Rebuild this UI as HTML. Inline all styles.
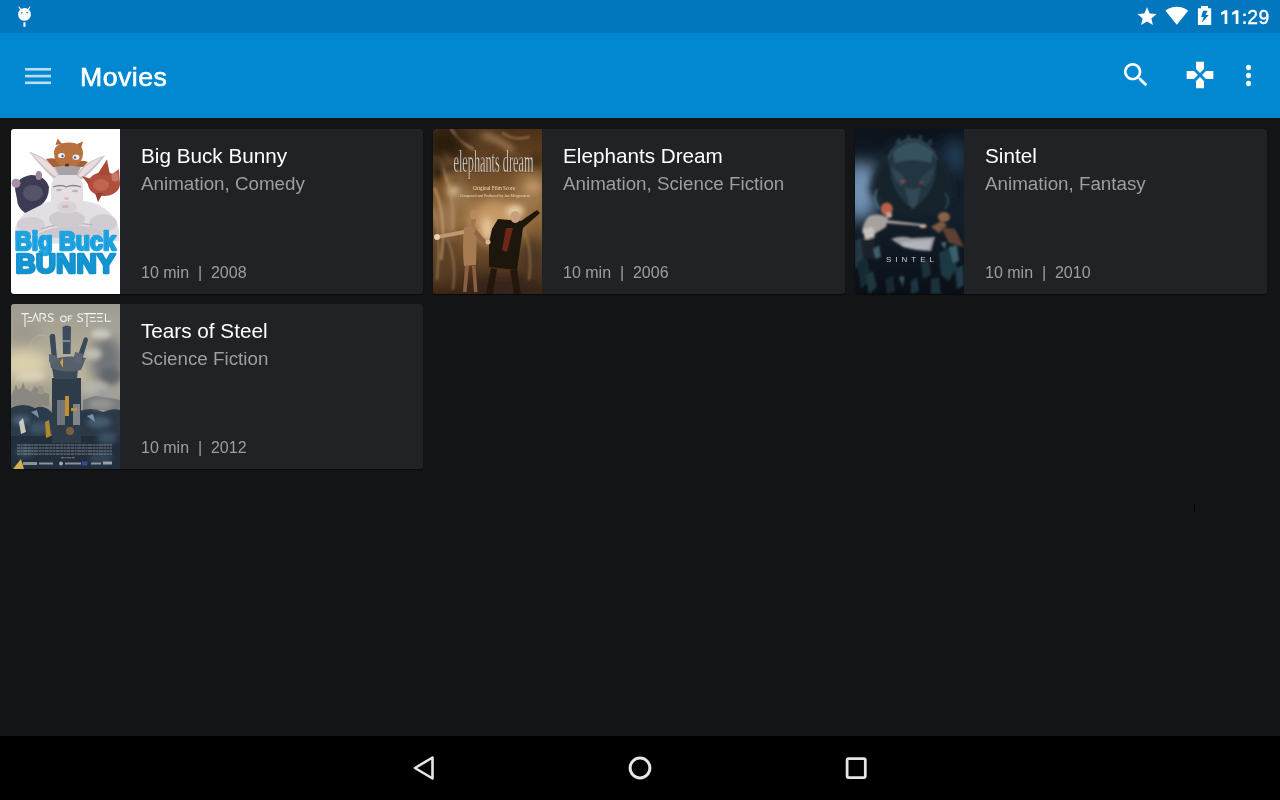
<!DOCTYPE html>
<html><head><meta charset="utf-8">
<style>
*{margin:0;padding:0;box-sizing:border-box}
html,body{width:1280px;height:800px;overflow:hidden;background:#141517;font-family:"Liberation Sans",sans-serif}
.abs{position:absolute}
#status{left:0;top:0;width:1280px;height:33px;background:#0277bd}
#toolbar{left:0;top:33px;width:1280px;height:85px;background:#0288d1}
#tbshadow{left:0;top:118px;width:1280px;height:1px;background:#17110f}
#title{will-change:transform;left:80px;top:62px;color:#fff;font-size:26.67px;font-weight:400;line-height:30px;letter-spacing:0.5px;-webkit-text-stroke:0.6px #fff}
#clock{will-change:transform;left:1220px;top:6px;color:#fff;font-size:19.3px;line-height:24px;letter-spacing:0.6px;-webkit-text-stroke:0.35px #fff}
#nav{left:0;top:736px;width:1280px;height:64px;background:#000}
.card{position:absolute;width:412px;height:165px;background:#212226;border-radius:3px;overflow:hidden;box-shadow:0 1px 1.5px rgba(0,0,0,.55)}
.poster{will-change:transform;position:absolute;left:0;top:0;width:109px;height:165px;overflow:hidden}
.poster svg{display:block}
.t1{will-change:transform;position:absolute;left:130px;top:16px;color:#fff;font-size:20.7px;line-height:22px;white-space:nowrap}
.t2{will-change:transform;position:absolute;left:130px;top:44px;color:#9e9e9e;font-size:18.8px;line-height:22px;white-space:nowrap}
.t3{will-change:transform;position:absolute;left:130px;top:135px;color:#9e9e9e;font-size:16px;line-height:18px;white-space:pre}
</style></head><body>
<div id="status" class="abs"></div>
<div id="toolbar" class="abs"></div>
<div id="tbshadow" class="abs"></div>

<!-- status bar icons -->
<svg class="abs" style="left:0;top:0" width="1280" height="32">
  <!-- android bot -->
  <g fill="#fff">
    <circle cx="24.5" cy="14.4" r="6.4"/>
    <rect x="23.4" y="22.3" width="2.1" height="4.5"/>
    <path d="M18.9 7 L20.9 9.6" stroke="#fff" stroke-width="1.15" stroke-linecap="round"/>
    <path d="M29.9 7 L27.9 9.6" stroke="#fff" stroke-width="1.15" stroke-linecap="round"/>
  </g>
  <g fill="#0277bd">
    <path d="M20.5 12.2 h2.4 l-1.2 1.6z"/>
    <path d="M26 12.2 h2.4 l-1.2 1.6z"/>
  </g>
  <!-- star -->
  <path fill="#fff" transform="translate(1135.5,5.4) scale(0.96,0.93)" d="M12 17.27L18.18 21l-1.64-7.03L22 9.24l-7.19-.61L12 2 9.19 8.63 2 9.24l5.46 4.73L5.82 21z"/>
  <!-- wifi -->
  <path fill="#fff" transform="translate(1165.1,3.9) scale(0.975)" d="M12.01 21.49L23.64 7c-.45-.34-4.93-4-11.64-4C5.28 3 .81 6.66.36 7l11.63 14.49.01.01.01-.01z"/>
  <!-- battery -->
  <path fill="#fff" fill-rule="evenodd" d="M1201 6.1h7v2.1h3.2v16.7h-13.3v-16.7h3.1z M1203 10.8h4.6l-2.1 4.3h3.3l-7.1 7.6 2-5.6h-2.6z"/>
</svg>
<div id="clock" class="abs"><span style="color:transparent;-webkit-text-stroke:0">11:</span>29</div>
<svg class="abs" style="left:1200px;top:0" width="60" height="32" fill="#fff">
  <path d="M24.6 10.2 H27.3 V23.9 H24.6 V13.6 L21.1 14.9 V12.6 Z"/>
  <path d="M35.7 10.2 H38.4 V23.9 H35.7 V13.6 L32.2 14.9 V12.6 Z"/>
  <rect x="43.2" y="13.4" width="2.6" height="2.6" rx="0.6"/>
  <rect x="43.2" y="21.3" width="2.6" height="2.6" rx="0.6"/>
</svg>

<!-- toolbar icons -->
<svg class="abs" style="left:0;top:32px" width="1280" height="86">
  <g fill="#fff" fill-opacity="0.72">
    <rect x="25" y="36" width="26" height="2.6"/>
    <rect x="25" y="42.8" width="26" height="2.6"/>
    <rect x="25" y="49.5" width="26" height="2.6"/>
  </g>
  <g transform="translate(1120,27) scale(1.3333)" fill="#fff">
    <path d="M15.5 14h-.79l-.28-.27C15.41 12.59 16 11.11 16 9.5 16 5.910 13.09 3 9.5 3S3 5.91 3 9.5 5.91 16 9.5 16c1.61 0 3.09-.59 4.23-1.57l.27.28v.79l5 4.99L20.49 19l-4.99-5zm-6 0C7.01 14 5 11.99 5 9.5S7.01 5 9.5 5 14 7.01 14 9.5 11.99 14 9.5 14z"/>
  </g>
  <g transform="translate(1184,27) scale(1.3333)" fill="#fff">
    <path d="M15 7.5V2H9v5.5l3 3 3-3zM7.5 9H2v6h5.5l3-3-3-3zM9 16.5V22h6v-5.5l-3-3-3 3zM16.5 9l-3 3 3 3H22V9h-5.5z"/>
  </g>
  <g transform="translate(1232.5,27.5) scale(1.3333)" fill="#fff">
    <path d="M12 8c1.1 0 2-.9 2-2s-.9-2-2-2-2 .9-2 2 .9 2 2 2zm0 2c-1.1 0-2 .9-2 2s.9 2 2 2 2-.9 2-2-.9-2-2-2zm0 6c-1.1 0-2 .9-2 2s.9 2 2 2 2-.9 2-2-.9-2-2-2z"/>
  </g>
</svg>
<div id="title" class="abs">Movies</div>

<div class="card" style="left:11px;top:129px">
  <div class="poster" id="p1"><svg width="109" height="165" viewBox="0 0 109 165">
<defs>
  <filter id="b1" x="-20%" y="-20%" width="140%" height="140%"><feGaussianBlur stdDeviation="0.7"/></filter>
  <filter id="b2" x="-30%" y="-30%" width="160%" height="160%"><feGaussianBlur stdDeviation="2"/></filter>
  <linearGradient id="bbt" x1="0" y1="0" x2="0" y2="1"><stop offset="0" stop-color="#22aae6"/><stop offset="1" stop-color="#0e88c8"/></linearGradient>
</defs>
<rect width="109" height="165" fill="#fff"/>
<g filter="url(#b1)">
  <!-- body -->
  <path d="M4 101 Q6 86 25 78 Q40 70 55 72 Q75 70 88 76 Q106 86 108 101 L108 112 Q55 118 4 112z" fill="#e2dfe3"/>
  <ellipse cx="20" cy="96" rx="14" ry="8" fill="#d2ced3"/>
  <ellipse cx="92" cy="94" rx="14" ry="9" fill="#d0ccd1"/>
  <path d="M28 104 Q50 94 80 98 Q90 100 92 106 Q60 110 28 108z" fill="#ccc7cc"/>
  <path d="M30 100 Q55 92 82 96" stroke="#b8b2b8" stroke-width="1.2" fill="none"/>
  <ellipse cx="56" cy="90" rx="18" ry="9" fill="#cfcace"/>
  <!-- ears -->
  <path d="M18 22.5 Q34 28 44 38 L50.5 47 L43 50 Q30 38 18 22.5z" fill="#cbc1c4"/>
  <path d="M21 24.5 Q34 30 42 38 L47 46 L43.5 47 Q31 37 21 24.5z" fill="#eddcdd"/>
  <path d="M94 26.5 Q78 31 70 40 L64 48 L71 50.5 Q84 40 94 26.5z" fill="#cbc1c4"/>
  <path d="M91 28 Q78 33 71 41 L67 47 L70.5 48 Q82 39 91 28z" fill="#eddcdd"/>
  <!-- chinchilla -->
  <path d="M4 60 Q6 48 20 46 Q34 46 38 58 Q38 70 30 76 L14 84 Q6 78 6 70z" fill="#3d3b53"/>
  <ellipse cx="22" cy="64" rx="10" ry="8" fill="#55526a"/>
  <ellipse cx="5" cy="54.3" rx="4.5" ry="4.5" fill="#a690a8"/>
  <ellipse cx="27.8" cy="46.5" rx="3.2" ry="4.5" fill="#9c86a0"/>
  <!-- red squirrel -->
  <ellipse cx="93" cy="55" rx="16" ry="12" fill="#b0503c"/>
  <path d="M86 46 L96 30.5 L99 46z" fill="#a84a36"/>
  <path d="M100 46 L108 40 L109 56z" fill="#b85a46"/>
  <path d="M80 50 L71 47 L79 58z" fill="#a84a36"/>
  <path d="M84 64 L87 73 L92 64z" fill="#983e2e"/>
  <ellipse cx="90" cy="56" rx="8" ry="6" fill="#c06450"/>
  <ellipse cx="104" cy="48" rx="3.5" ry="4.5" fill="#c87a6a"/>
  <!-- head -->
  <path d="M40 60 Q40 45 56 44 Q72 45 72 60 L72 72 Q70 84 56 84 Q42 84 40 72z" fill="#e2dee2"/><ellipse cx="56" cy="78" rx="10" ry="6" fill="#d8d2d6"/>
  <path d="M42 58 Q50 55 55 58 Q62 55 70 58" stroke="#8a8088" stroke-width="1.3" fill="none"/>
  <ellipse cx="48" cy="61" rx="3" ry="1.3" fill="#c8b0b4"/>
  <ellipse cx="64" cy="62" rx="3" ry="1.3" fill="#c8b0b4"/>
  <ellipse cx="55.6" cy="69.5" rx="2.2" ry="1.5" fill="#e0b8bc"/>
  <ellipse cx="54.3" cy="77.5" rx="3.5" ry="1.6" fill="#d4b4b4"/>
  <!-- orange squirrel -->
  <path d="M35 30 Q44 28 50 32 L62 34 Q70 30 77 33 L72 38 L42 38z" fill="#a46038"/>
  <path d="M43 24 Q43 14 58 13.5 Q72 14 72 24 Q72 34 62 38 L52 38 Q43 34 43 24z" fill="#b8703e"/>
  <path d="M44.5 16 L46.7 9.5 L51 15z" fill="#b06a3a"/>
  <path d="M66 15 L72 12.6 L70 19z" fill="#b06a3a"/>
  <path d="M44 38 Q56 35 70 38 L66 46 L48 46z" fill="#a8a2a6"/>
  <ellipse cx="50.5" cy="26.5" rx="3.4" ry="2.6" fill="#f0f0f4"/>
  <ellipse cx="65" cy="28.2" rx="3.4" ry="2.6" fill="#f0f0f4"/>
  <circle cx="51.5" cy="27" r="1.2" fill="#4a5aa0"/>
  <circle cx="64" cy="28.5" r="1.2" fill="#4a5aa0"/>
  <ellipse cx="56" cy="36" rx="2.2" ry="1.6" fill="#5a3020"/>
</g>
<!-- title -->
<g font-family="Liberation Sans" font-weight="700" fill="url(#bbt)">
  <text x="4" y="121" font-size="25" textLength="101" lengthAdjust="spacingAndGlyphs" stroke="#1ea4e0" stroke-width="2.6" stroke-linejoin="round">Big Buck</text>
  <text x="4.5" y="144" font-size="27" textLength="100" lengthAdjust="spacingAndGlyphs" stroke="#1292cf" stroke-width="2.6" stroke-linejoin="round">BUNNY</text>
</g>
</svg>
</div>
  <div class="t1">Big Buck Bunny</div>
  <div class="t2">Animation, Comedy</div>
  <div class="t3">10 min  |  2008</div>
</div>
<div class="card" style="left:433px;top:129px">
  <div class="poster" id="p2"><svg width="109" height="165" viewBox="0 0 109 165">
<defs>
  <filter id="e1" x="-30%" y="-30%" width="160%" height="160%"><feGaussianBlur stdDeviation="0.6"/></filter>
  <filter id="e4" x="-50%" y="-50%" width="200%" height="200%"><feGaussianBlur stdDeviation="1.3"/></filter>
  <filter id="e2" x="-50%" y="-50%" width="200%" height="200%"><feGaussianBlur stdDeviation="3"/></filter>
  <filter id="e3" x="-50%" y="-50%" width="200%" height="200%"><feGaussianBlur stdDeviation="7"/></filter>
  <linearGradient id="ebg" x1="0" y1="0" x2="0" y2="1">
    <stop offset="0" stop-color="#4c3018"/><stop offset="0.3" stop-color="#74502a"/><stop offset="0.55" stop-color="#90683a"/><stop offset="0.8" stop-color="#604226"/><stop offset="1" stop-color="#3a2412"/>
  </linearGradient>
</defs>
<rect width="109" height="165" fill="url(#ebg)"/>
<g filter="url(#e3)">
  <ellipse cx="62" cy="92" rx="26" ry="22" fill="#c89a68"/>
  <ellipse cx="98" cy="62" rx="16" ry="22" fill="#a07a50"/>
  <ellipse cx="12" cy="15" rx="22" ry="18" fill="#2c1c10"/>
  <ellipse cx="50" cy="8" rx="20" ry="10" fill="#5a4028"/>
  <ellipse cx="8" cy="125" rx="12" ry="30" fill="#5a4028"/>
  <ellipse cx="70" cy="160" rx="40" ry="12" fill="#34241a"/>
  <ellipse cx="28" cy="68" rx="10" ry="12" fill="#a08058"/>
  <ellipse cx="100" cy="130" rx="12" ry="20" fill="#4a3422"/>
</g>
<g filter="url(#e2)" opacity="0.9">
  <path d="M2 30 Q26 50 18 110" stroke="#a8865e" stroke-width="4" fill="none"/>
  <path d="M10 25 Q30 40 30 70" stroke="#8a6a48" stroke-width="3" fill="none"/>
  <path d="M50 6 Q70 12 80 22" stroke="#a88058" stroke-width="6" fill="none"/>
  <path d="M0 45 Q20 40 40 30" stroke="#3a2614" stroke-width="6" fill="none"/>
  <path d="M60 30 Q85 40 109 30" stroke="#4a321c" stroke-width="5" fill="none"/>
  <ellipse cx="20" cy="62" rx="6" ry="4" fill="#e0c8a0"/>
  <ellipse cx="82" cy="82" rx="9" ry="6" fill="#f0d8b0"/>
  <ellipse cx="54" cy="100" rx="5" ry="12" fill="#e8cca0"/>
  <ellipse cx="100" cy="58" rx="8" ry="6" fill="#c09468"/>
  <ellipse cx="10" cy="90" rx="8" ry="16" fill="#9a7450"/>
</g>
<g filter="url(#e4)" opacity="0.6" stroke-linecap="round" fill="none">
  <path d="M2 60 Q14 90 8 130" stroke="#d0a878" stroke-width="2.6"/>
  <path d="M10 40 Q22 70 20 100" stroke="#c09868" stroke-width="2.2"/>
  <path d="M0 80 Q8 100 4 150" stroke="#b08858" stroke-width="2.2"/>
  <path d="M18 0 Q28 14 40 20" stroke="#c8a070" stroke-width="2.2"/>
  <path d="M70 4 Q80 12 96 8" stroke="#b89060" stroke-width="2.2"/>
  <path d="M90 100 Q100 120 96 150" stroke="#a07a50" stroke-width="2.4"/>
  <path d="M14 110 Q24 130 20 160" stroke="#a88058" stroke-width="2.2"/>
</g>
<g filter="url(#e2)" opacity="0.8">
  <ellipse cx="4" cy="40" rx="5" ry="12" fill="#2a1a0c"/>
  <ellipse cx="30" cy="8" rx="10" ry="5" fill="#3a2612"/>
  <ellipse cx="104" cy="30" rx="6" ry="10" fill="#4a3018"/>
</g>
<!-- title -->
<text x="20.5" y="42" font-family="Liberation Serif" font-size="25" fill="#dcdad6" stroke="#3a2a1a" stroke-width="0.3" textLength="80" lengthAdjust="spacingAndGlyphs" transform="translate(0,-12) scale(1,1.3)">elephants dream</text>
<text x="40" y="60.5" font-family="Liberation Serif" font-size="6.5" fill="#f0dcc4" textLength="42" lengthAdjust="spacingAndGlyphs">Original Film Score</text>
<text x="27" y="68" font-family="Liberation Serif" font-size="5" fill="#ecd8c0" textLength="70" lengthAdjust="spacingAndGlyphs">Composed and Produced by Jan Morgenstern</text>
<!-- figures -->
<g filter="url(#e1)">
  <!-- left figure -->
  <path d="M31 99 Q37 96 44 98 L43 136 L31 137 Q29 118 31 99z" fill="#a87c52"/>
  <path d="M31 101 L5 106 L4 110 L31 105z" fill="#c09870"/>
  <path d="M43 100 L56 115 L53 118 L41 105z" fill="#8c6644"/>
  <path d="M32 137 L30 163 L33.5 163 L36 137z M39 137 L41 163 L44.5 163 L42.5 137z" fill="#8a6040"/>
  <ellipse cx="40.5" cy="86" rx="3.4" ry="5" fill="#b88a60"/>
  <path d="M38 90 L43 90 L42 98 L38 98z" fill="#a07450"/>
  <ellipse cx="4" cy="108" rx="3" ry="3" fill="#e8d0b0"/>
  <!-- right figure -->
  <path d="M65 90 L88 92 L104 81 L107 84 L90 99 L84 141 L56 138 L56 114 L59 100z" fill="#1e140e"/>
  <path d="M73 99 L80 99 L74 123 L69 121z" fill="#6e2616"/>
  <path d="M58 139 L53 165 L60 165 L64 140z M77 141 L81 165 L88 165 L84 140z" fill="#22170e"/>
  <ellipse cx="82.3" cy="88" rx="5" ry="6" fill="#c8a080"/>
  <ellipse cx="55" cy="113" rx="2.5" ry="2.5" fill="#d8b890"/>
</g>
</svg>
</div>
  <div class="t1">Elephants Dream</div>
  <div class="t2">Animation, Science Fiction</div>
  <div class="t3">10 min  |  2006</div>
</div>
<div class="card" style="left:855px;top:129px">
  <div class="poster" id="p3"><svg width="109" height="165" viewBox="0 0 109 165">
<defs>
  <filter id="s1" x="-30%" y="-30%" width="160%" height="160%"><feGaussianBlur stdDeviation="0.8"/></filter>
  <filter id="s2" x="-50%" y="-50%" width="200%" height="200%"><feGaussianBlur stdDeviation="3"/></filter>
  <filter id="s3" x="-80%" y="-80%" width="260%" height="260%"><feGaussianBlur stdDeviation="8"/></filter>
  <linearGradient id="sbg" x1="0" y1="0" x2="0" y2="1">
    <stop offset="0" stop-color="#0c131c"/><stop offset="0.5" stop-color="#13202c"/><stop offset="1" stop-color="#0a0f16"/>
  </linearGradient>
</defs>
<rect width="109" height="165" fill="url(#sbg)"/>
<g filter="url(#s3)">
  <ellipse cx="5" cy="62" rx="18" ry="30" fill="#7292b2"/>
  <ellipse cx="100" cy="28" rx="12" ry="18" fill="#223c56"/>
  <ellipse cx="55" cy="45" rx="35" ry="30" fill="#1a2a36"/>
</g>
<!-- dragon -->
<g filter="url(#s2)">
  <path d="M14 62 Q18 34 36 26 Q56 10 80 22 Q100 34 100 70 L82 86 L32 86z" fill="#16222c"/>
</g>
<g filter="url(#s1)">
  <path d="M33 30 Q38 12 57 10 Q76 12 82 30 L80 50 Q74 70 58 80 Q42 70 36 50z" fill="#223440"/>
  <path d="M38 24 Q46 14 58 13 Q70 14 78 24 L76 34 Q58 28 40 34z" fill="#36525e"/>
  <path d="M36 38 Q46 42 52 52 L46 58 Q38 50 36 38z" fill="#2e4652"/>
  <path d="M80 38 Q70 42 64 52 L70 58 Q78 50 80 38z" fill="#2a424e"/>
  <path d="M50 58 Q58 62 66 58 L62 76 L58 80 L54 76z" fill="#304854"/>
  <path d="M40 14 L44 8 L46 14z M50 10 L54 5 L56 11z M62 10 L66 5 L68 11z M72 14 L76 9 L77 16z" fill="#2a3e4a"/>
  <path d="M33 30 Q38 12 57 10 Q76 12 82 30" stroke="#4a7080" stroke-width="0.8" fill="none"/>
  <ellipse cx="47.5" cy="52.6" rx="2" ry="1" fill="#b8403a"/>
  <ellipse cx="66" cy="53.7" rx="1.8" ry="1" fill="#9a3a34"/>
  <path d="M22 60 Q17 72 24 80" stroke="#4e7e8e" stroke-width="1.4" fill="none"/>
  <path d="M90 64 Q96 72 90 80" stroke="#3a6070" stroke-width="1.2" fill="none"/>
</g>
<!-- girl -->
<g filter="url(#s1)">
  <path d="M14 87 Q24 83 33 89 L31 98 Q22 104 12 109 L7 103 Q8 94 14 87z" fill="#a8a09c"/><path d="M31 91 L66 95 L66 97 L31 94z" fill="#b0a49e"/>
  <path d="M8 100 L18 98 L20 108 L10 111z" fill="#c8c0bc"/>
  <path d="M6 110 L20 110 L18 130 L8 128z" fill="#1e242a"/>
  <ellipse cx="31.7" cy="80" rx="6" ry="6.5" fill="#b8604a"/>
  <ellipse cx="34" cy="86" rx="3" ry="3" fill="#c8a090"/>
  <ellipse cx="68" cy="97" rx="3.5" ry="2" fill="#d0aca0"/>
  <!-- baby dragon -->
  <ellipse cx="89" cy="88" rx="6" ry="5" fill="#8a6446"/>
  <path d="M76 98 L86 92 L92 96 L84 104z" fill="#7a5a40"/>
  <path d="M86 98 L100 100 L109 118 L94 114z" fill="#5e4030"/>
  <!-- sword -->
  <path d="M36 110 Q46 106 56 109 L80 108 L76 122 Q62 122 48 118z" fill="#9a9aa2"/>
  <path d="M46 113 L76 111 L74 120 Q62 121 48 117z" fill="#b4b4bc"/>
</g>
<!-- crystals -->
<g filter="url(#s1)">
  <path d="M0 112 L6 108 L9 132 L0 140z" fill="#213742"/>
  <path d="M2 134 L12 128 L16 150 L6 160z" fill="#172a33"/>
  <path d="M18 120 L24 116 L26 128 L20 130z" fill="#3a606c"/>
  <path d="M10 146 L18 142 L22 158 L14 165z" fill="#1f3740"/>
  <path d="M66 134 L74 130 L76 146 L68 150z" fill="#1b3039"/>
  <path d="M84 124 L96 118 L102 138 L94 152 L86 146z" fill="#1f3742"/>
  <path d="M94 118 L102 116 L104 132 L98 134z" fill="#3a616d"/>
  <path d="M86 114 L91 113 L90 120z" fill="#4f7581"/>
  <path d="M100 140 L108 136 L109 156 L102 160z" fill="#223c48"/>
  <path d="M30 150 L38 146 L40 162 L32 165z" fill="#162831"/>
  <path d="M44 148 L49 147 L48 158z" fill="#375b66"/>
  <path d="M56 152 L62 148 L64 162 L56 165z" fill="#1e343f"/>
  <path d="M76 150 L84 148 L86 165 L76 165z" fill="#1a3039"/>
</g>
<text x="31" y="132.7" font-family="Liberation Sans" font-size="8" fill="#cfcfd4" textLength="48" lengthAdjust="spacing">SINTEL</text>
</svg>
</div>
  <div class="t1">Sintel</div>
  <div class="t2">Animation, Fantasy</div>
  <div class="t3">10 min  |  2010</div>
</div>
<div class="card" style="left:11px;top:304px">
  <div class="poster" id="p4"><svg width="109" height="165" viewBox="0 0 109 165">
<defs>
  <filter id="t0" x="-10%" y="-50%" width="120%" height="200%"><feGaussianBlur stdDeviation="0.6"/></filter>
  <filter id="t1" x="-30%" y="-30%" width="160%" height="160%"><feGaussianBlur stdDeviation="0.7"/></filter>
  <filter id="t2" x="-50%" y="-50%" width="200%" height="200%"><feGaussianBlur stdDeviation="2.5"/></filter>
  <filter id="t3" x="-80%" y="-80%" width="260%" height="260%"><feGaussianBlur stdDeviation="6"/></filter>
  <linearGradient id="tbg" x1="0" y1="0" x2="0" y2="1">
    <stop offset="0" stop-color="#9c9a90"/><stop offset="0.25" stop-color="#b0aa98"/><stop offset="0.45" stop-color="#bcb49c"/><stop offset="0.6" stop-color="#9a9890"/><stop offset="1" stop-color="#6a6e70"/>
  </linearGradient>
</defs>
<rect width="109" height="165" fill="url(#tbg)"/>
<g filter="url(#t3)">
  <ellipse cx="14" cy="60" rx="22" ry="14" fill="#dcd0ac"/>
  <ellipse cx="96" cy="58" rx="16" ry="26" fill="#707478"/>
  <ellipse cx="90" cy="20" rx="20" ry="12" fill="#a4a298"/>
  <ellipse cx="12" cy="28" rx="16" ry="14" fill="#9e9a8c"/>
  <ellipse cx="30" cy="88" rx="22" ry="10" fill="#a8a090"/>
</g>
<g filter="url(#t2)" opacity="0.85">
  <ellipse cx="90" cy="30" rx="10" ry="5" fill="#d4d0c4"/>
  <ellipse cx="82" cy="50" rx="9" ry="6" fill="#c8c4b8"/>
  <ellipse cx="100" cy="72" rx="10" ry="8" fill="#5e646a"/>
  <ellipse cx="84" cy="84" rx="14" ry="7" fill="#b8b6ae"/>
  <ellipse cx="20" cy="72" rx="14" ry="5" fill="#dcd4bc"/>
  <ellipse cx="96" cy="92" rx="12" ry="8" fill="#a0a0a0"/>
</g>
<circle cx="31" cy="43" r="12" fill="none" stroke="#c4c0b0" stroke-width="0.8" opacity="0.55" filter="url(#t1)"/>
<!-- city -->
<g filter="url(#t1)">
  <path d="M0 92 L3 86 L5 80 L7 86 L10 84 L12 78 L14 84 L20 88 L24 82 L28 86 L38 90 L38 102 L0 104z" fill="#8a8880"/>
  <path d="M26 90 L28 82 L32 82 L34 90z" fill="#9a968a"/>
  <path d="M72 96 L84 92 L100 94 L109 96 L109 106 L72 106z" fill="#7a7c7e"/>
</g>
<!-- rubble -->
<g filter="url(#t1)">
  <path d="M0 104 Q12 98 24 104 Q34 100 42 110 L40 140 L0 140z" fill="#2c3a48"/>
  <path d="M66 108 Q80 102 92 108 Q100 104 109 106 L109 165 L66 165z" fill="#2a3846"/>
  <path d="M0 132 L109 132 L109 165 L0 165z" fill="#222e3a"/>
</g>
<g filter="url(#t2)" opacity="0.9">
  <ellipse cx="10" cy="116" rx="9" ry="5" fill="#4e6278"/>
  <ellipse cx="28" cy="124" rx="10" ry="6" fill="#40546a"/>
  <ellipse cx="88" cy="118" rx="12" ry="6" fill="#4a5e74"/>
  <ellipse cx="96" cy="134" rx="10" ry="6" fill="#3e5268"/>
  <ellipse cx="14" cy="148" rx="10" ry="6" fill="#34465a"/>
  <ellipse cx="90" cy="154" rx="12" ry="6" fill="#34465a"/>
  <ellipse cx="90" cy="100" rx="12" ry="5" fill="#9a9a96"/>
</g>
<g filter="url(#t1)">
  <path d="M8 118 L12 114 L15 128 L10 130z" fill="#c8c8c0"/>
  <path d="M34 118 L38 116 L40 132 L35 134z" fill="#b08830"/>
  <path d="M76 112 L82 110 L84 118z" fill="#7890a8"/>
  <path d="M20 108 L26 106 L28 114z" fill="#7890a8"/>
</g>
<!-- hand tower -->
<g filter="url(#t1)">
  <path d="M41 74 L70 74 L70 139 L41 139z" fill="#2e3a4a"/>
  <path d="M46 96 L54 96 L54 121 L46 121z" fill="#70767c"/>
  <path d="M62 100 L69 100 L69 121 L62 121z" fill="#80868a"/>
  <path d="M54 92 L58 92 L58 112 L54 112z" fill="#c09030"/>
  <path d="M60 104 L66 104 L66 107 L60 107z" fill="#c09030"/>
  <ellipse cx="59" cy="127" rx="4" ry="4" fill="#7a6040"/>
  <path d="M41 64 Q54 60 67 64 L66 75 L43 75z" fill="#3c4a58"/>
  <path d="M38.7 56 Q56 50 75 54 L70 66 Q54 70 40 64z" fill="#56606c"/>
  <path d="M49 58 L52 54 L52 64z" fill="#d0a838"/>
  <!-- fingers -->
  <path d="M38.5 32 Q41 28 44 31 L46 54 L41 56z" fill="#3a4a5c"/>
  <path d="M51.5 23 Q56 20 60 23 L59.5 50 L52 50z" fill="#3c4c5e"/>
  <rect x="52" y="36" width="7" height="2" fill="#7a8a98"/>
  <path d="M73 34 Q76.5 32 77 36 L71 56 L66 54z" fill="#3a4a5c"/>
  <path d="M38 50 L46 52 L44 60 L38 58z" fill="#5a6674"/>
  <path d="M64 48 L72 50 L70 60 L62 58z" fill="#5a6674"/>
</g>
<!-- credits -->
<g stroke="#c0c4c8" stroke-width="1.1" stroke-dasharray="3 0.6 2 0.6 4 0.6" opacity="0.55" filter="url(#t0)">
  <path d="M6 141 H101"/><path d="M6 144 H101"/><path d="M6 147 H101"/><path d="M6 150 H101"/>
  <path d="M50 153.8 H64"/>
</g>
<g opacity="0.8" filter="url(#t0)">
  <rect x="12" y="158" width="14" height="3" fill="#a8acb0"/>
  <rect x="28" y="158.5" width="14" height="2" fill="#a8acb0"/>
  <circle cx="50" cy="159.5" r="2" fill="#c0c4c8"/>
  <rect x="54" y="158.5" width="16" height="2" fill="#a8acb0"/>
  <rect x="71" y="157.5" width="5.5" height="4" fill="#3a50b0"/>
  <rect x="80" y="158.5" width="10" height="2" fill="#a8acb0"/>
  <rect x="92" y="157.5" width="9" height="3" fill="#b8bcc0"/>
</g>
<path d="M2 165 L10 155 L13 165z" fill="#d0b050" filter="url(#t1)"/>
<!-- title -->
<g fill="none" stroke="#f4f4f2" stroke-width="1.05">
  <path d="M10.2 9.6 H18 M14 9.6 V23"/>
  <path d="M17 13.5 H21 M17 17.2 H21 M16 17.2 H21"/>
  <path d="M21.5 17.5 L24.5 9.6 L27.5 17.5"/>
  <path d="M29 17.5 V9.6 H32 Q34.5 9.6 34.5 12 Q34.5 14 32 14 L35 17.5"/>
  <path d="M42.5 10.5 Q40.5 9.4 38.5 10 Q36.5 11 38 12.8 L41 14.2 Q43 15.6 41.5 17 Q39 18 36.5 16.8"/>
  <circle cx="52.5" cy="14.7" r="2.8"/>
  <path d="M57.5 17.5 V12 H61.5 M57.5 14.7 H60.5"/>
  <path d="M72 10.5 Q70 9.4 68 10 Q66 11 67.5 12.8 L70.5 14.2 Q72.5 15.6 71 17 Q68.5 18 66 16.8"/>
  <path d="M72.5 9.6 H79.5 M76 9.6 V23"/>
  <path d="M79 9.6 H85 M79 13.5 H84 M79 17.2 H85"/>
  <path d="M86 9.6 H92 M86 13.5 H91 M86 17.2 H92"/>
  <path d="M94.5 9.6 V17.2 H100"/>
</g>
</svg>
</div>
  <div class="t1">Tears of Steel</div>
  <div class="t2">Science Fiction</div>
  <div class="t3">10 min  |  2012</div>
</div>

<div class="abs" style="left:1193.5px;top:504px;width:1.6px;height:8px;background:#000"></div>

<div id="nav" class="abs"></div>
<svg class="abs" style="left:0;top:736px" width="1280" height="64" fill="none" stroke="#e6e6e6">
  <path d="M415 32 L432.5 21.5 L432.5 42.5 Z" stroke-width="2.6" stroke-linejoin="round"/>
  <circle cx="640" cy="32" r="9.9" stroke-width="3"/>
  <rect x="847.1" y="22.6" width="18.2" height="19" rx="1.5" stroke-width="2.75"/>
</svg>
</body></html>
